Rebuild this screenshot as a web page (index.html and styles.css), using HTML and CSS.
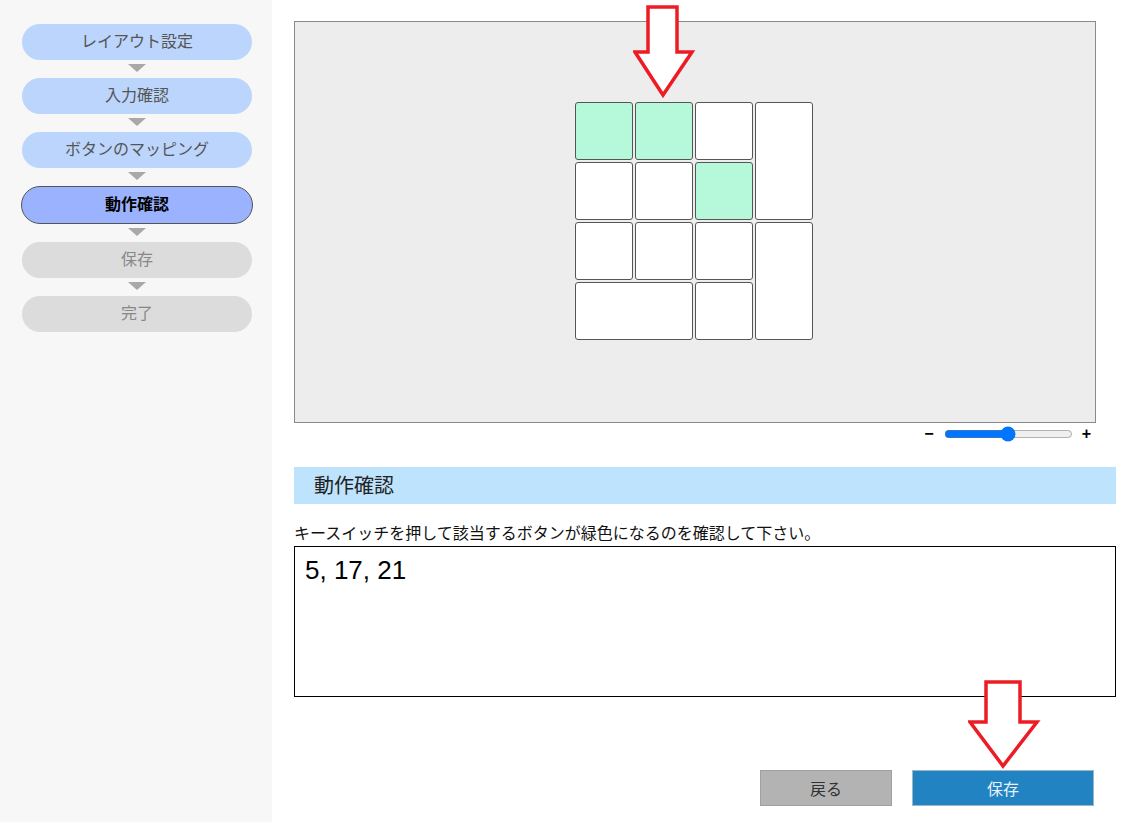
FILE: index.html
```html
<!DOCTYPE html>
<html lang="ja">
<head>
<meta charset="utf-8">
<link rel="stylesheet" href="styles.css">
</head>
<body>
<div class="app">
  <aside class="sidebar">
    <div class="step done">レイアウト設定</div>
    <div class="tri"></div>
    <div class="step done">入力確認</div>
    <div class="tri"></div>
    <div class="step done">ボタンのマッピング</div>
    <div class="tri"></div>
    <div class="step active">動作確認</div>
    <div class="tri"></div>
    <div class="step todo">保存</div>
    <div class="tri"></div>
    <div class="step todo">完了</div>
  </aside>
  <main class="main">
    <div class="canvas">
      <div class="keys">
        <div class="key on"></div>
        <div class="key on"></div>
        <div class="key"></div>
        <div class="key tall"></div>
        <div class="key"></div>
        <div class="key"></div>
        <div class="key on"></div>
        <div class="key"></div>
        <div class="key"></div>
        <div class="key"></div>
        <div class="key tall"></div>
        <div class="key wide"></div>
        <div class="key"></div>
      </div>
    </div>
    <div class="zoom">
      <span class="zm minus">−</span>
      <input class="range" type="range" min="0" max="100" value="50">
      <span class="zm plus">+</span>
    </div>
    <h2 class="section">動作確認</h2>
    <p class="hint">キースイッチを押して該当するボタンが緑色になるのを確認して下さい。</p>
    <div class="output">5, 17, 21</div>
    <div class="actions">
      <button class="btn back">戻る</button>
      <button class="btn save">保存</button>
    </div>
  </main>
</div>
<svg class="arrow arrow1" width="64" height="94" viewBox="0 0 64 94">
  <path d="M15 2 H44 V47 H59 L30 90 L2 47 H15 Z" fill="#fff" stroke="#ed1c24" stroke-width="3.5" stroke-linejoin="miter"/>
</svg>
<svg class="arrow arrow2" width="74" height="90" viewBox="0 0 74 90">
  <path d="M18 2 H52 V42 H69 L35 86 L2 42 H18 Z" fill="#fff" stroke="#ed1c24" stroke-width="3.5" stroke-linejoin="miter"/>
</svg>
</body>
</html>
```

FILE: styles.css
```css
* { box-sizing: border-box; }
html, body { margin: 0; padding: 0; background: #fff; }
body {
  font-family: "Noto Sans CJK JP", "Liberation Sans", sans-serif;
  color: #111;
  width: 1134px;
  height: 822px;
  overflow: hidden;
  position: relative;
}
.app { display: flex; height: 822px; }
.sidebar {
  width: 272px;
  flex: none;
  background: #f7f7f7;
  padding: 24px 0 0 22px;
  display: flex;
  flex-direction: column;
}
.step {
  width: 230px;
  height: 36px;
  border-radius: 18px;
  display: flex;
  align-items: center;
  justify-content: center;
  font-size: 16px;
  line-height: 1;
  padding-bottom: 4px;
}
.step.done { background: #bcd5fd; color: #555; }
.step.active {
  background: #9bb2ff;
  color: #000;
  font-weight: bold;
  border: 1px solid #555;
  width: 232px;
  height: 38px;
  margin-left: -1px;
  border-radius: 19px;
}
.step.todo { background: #dcdcdc; color: #888; }
.tri {
  width: 0; height: 0;
  margin: 4px 0 6px 106px;
  border-left: 9px solid transparent;
  border-right: 9px solid transparent;
  border-top: 8px solid #a8a8a8;
}
.main {
  flex: 1;
  padding: 21px 18px 0 22px;
  display: flex;
  flex-direction: column;
}
.canvas {
  width: 802px;
  height: 402px;
  background: #ededed;
  border: 1px solid #8a8a8a;
  display: flex;
  align-items: center;
  justify-content: center;
}
.keys {
  display: grid;
  grid-template-columns: repeat(4, 58px);
  grid-template-rows: repeat(4, 58px);
  gap: 2px;
  margin: -2px 0 0 -2px;
}
.key {
  background: #fff;
  border: 1.5px solid #555;
  border-radius: 3px;
}
.key.on { background: #b6f9da; }
.key.tall { grid-row: span 2; }
.key.wide { grid-column: span 2; }
.zoom {
  width: 802px;
  height: 22px;
  display: flex;
  align-items: center;
  justify-content: flex-end;
}
.zm { font-family: "Liberation Sans", sans-serif; font-weight: bold; font-size: 16px; color: #000; }
.minus { margin-right: 10px; }
.plus { margin-left: 9px; margin-right: 5px; }
.range { width: 129px; margin: 0; accent-color: #0075ff; }
.section {
  margin: 22px 0 0;
  height: 37px;
  background: #bee3fd;
  font-size: 20px;
  font-weight: normal;
  color: #222;
  display: flex;
  align-items: center;
  padding: 0 0 2px 20px;
}
.hint {
  margin: 18px 0 0;
  font-size: 16px;
  line-height: 20px;
  color: #111;
}
.output {
  margin-top: 4px;
  height: 151px;
  border: 1px solid #000;
  font-family: "Liberation Sans", sans-serif;
  font-size: 26px;
  line-height: 30px;
  padding: 8px 10px;
  color: #000;
}
.actions {
  display: flex;
  justify-content: flex-end;
  gap: 20px;
  margin-top: 73px;
  padding-right: 22px;
}
.btn {
  height: 36px;
  font-family: "Noto Sans CJK JP", sans-serif;
  font-size: 16px;
  border: 1px solid #a0a0a0;
  border-radius: 0;
}
.btn.back { width: 132px; background: #b3b3b3; color: #333; }
.btn.save { width: 182px; background: #2183c2; color: #e8f2fa; border-color: #9cb6c8; }
.arrow { position: absolute; }
.arrow1 { left: 633px; top: 5px; }
.arrow2 { left: 968px; top: 680px; }
```
